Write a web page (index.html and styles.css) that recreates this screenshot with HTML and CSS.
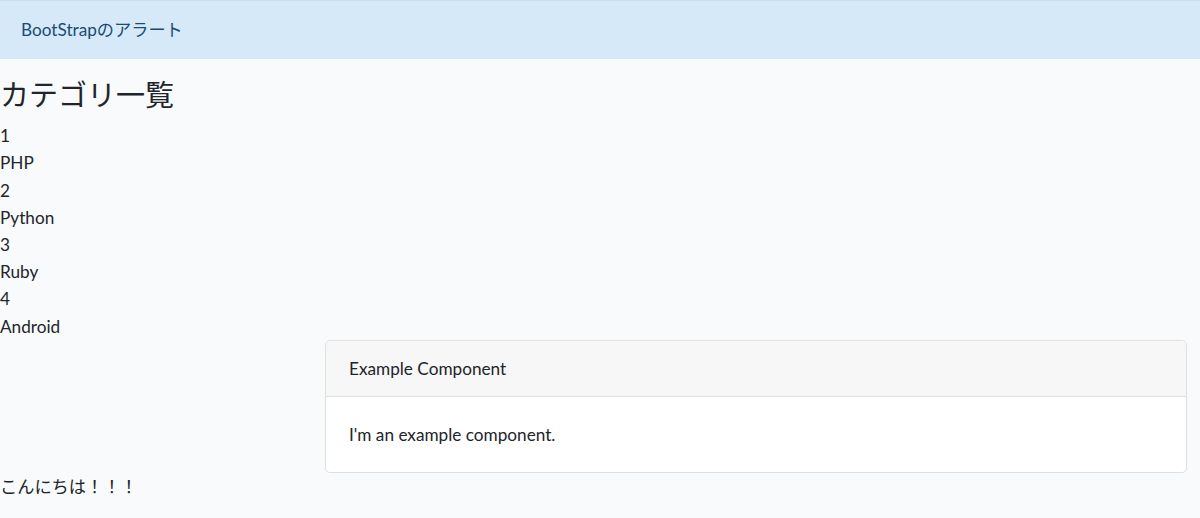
FILE: index.html
```html
<!DOCTYPE html>
<html lang="ja">
<head>
<meta charset="utf-8">
<title>BootStrap</title>
<link rel="stylesheet" href="styles.css">
</head>
<body>
<div class="alert">BootStrapのアラート</div>
<h3 class="title">カテゴリ一覧</h3>
<div class="list">
  <div>1</div>
  <div>PHP</div>
  <div>2</div>
  <div>Python</div>
  <div>3</div>
  <div>Ruby</div>
  <div>4</div>
  <div>Android</div>
</div>
<div class="card-row">
  <div class="card">
    <div class="card-header">Example Component</div>
    <div class="card-body">I'm an example component.</div>
  </div>
</div>
<div class="footer-text">こんにちは！！！</div>
</body>
</html>
```
FILE: styles.css
```css
html, body {
  margin: 0;
  padding: 0;
}
body {
  background: #f8fafc;
  color: #212529;
  font-family: Lato, "Noto Sans CJK JP", sans-serif;
  font-size: 17.2px;
  line-height: 27.2px;
}
.alert {
  background: #d6e9f8;
  color: #1b4b72;
  border-top: 1px solid #c6e0f5;
  border-bottom: 1px solid #d6e9f8;
  padding: 15px 21px;
  margin-bottom: 18px;
}
.title {
  font-size: 29px;
  line-height: 35px;
  font-weight: 400;
  margin: 0 0 10px 0;
}
.card-row {
  display: flex;
  justify-content: flex-end;
  padding-right: 13px;
}
.card {
  width: 862px;
  box-sizing: border-box;
  background: #fff;
  border: 1px solid #e0e0e0;
  border-radius: 5px;
  overflow: hidden;
}
.card-header {
  background: #f7f7f7;
  border-bottom: 1px solid #e0e0e0;
  padding: 14px 23px;
}
.card-body {
  padding: 24px 23px;
}
```
